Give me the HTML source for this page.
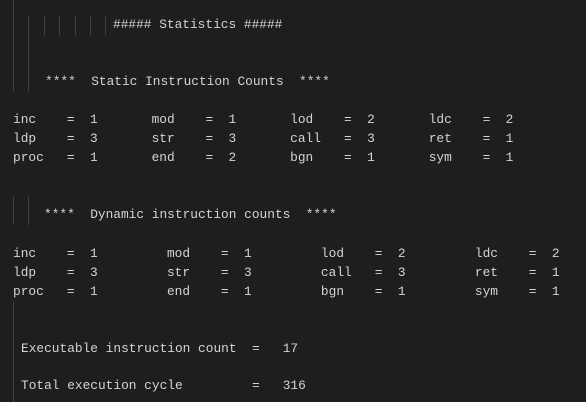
<!DOCTYPE html>
<html><head><meta charset="utf-8"><style>
html,body{margin:0;padding:0;}
body{width:586px;height:402px;background:#1e1e1e;position:relative;overflow:hidden;font-family:"Liberation Mono",monospace;font-size:12.83px;color:#d4d4d4;}
.t{position:absolute;white-space:pre;line-height:19px;}
.g{position:absolute;width:1px;background:#404040;}
</style></head><body>
<div class="g" style="left:13px;top:0;height:91px"></div>
<div class="g" style="left:28px;top:16px;height:75px"></div>
<div class="g" style="left:44px;top:16px;height:19px"></div>
<div class="g" style="left:59px;top:16px;height:19px"></div>
<div class="g" style="left:75px;top:16px;height:19px"></div>
<div class="g" style="left:90px;top:16px;height:19px"></div>
<div class="g" style="left:105px;top:16px;height:19px"></div>
<div class="t" style="left:113px;top:15px">##### Statistics #####</div>
<div class="t" style="left:45px;top:72px">****  Static Instruction Counts  ****</div>
<div class="t" style="left:13px;top:110px">inc    =  1       mod    =  1       lod    =  2       ldc    =  2
ldp    =  3       str    =  3       call   =  3       ret    =  1
proc   =  1       end    =  2       bgn    =  1       sym    =  1</div>
<div class="g" style="left:13px;top:196px;height:29px"></div>
<div class="g" style="left:28px;top:196px;height:29px"></div>
<div class="t" style="left:44px;top:205px">****  Dynamic instruction counts  ****</div>
<div class="t" style="left:13px;top:244px">inc    =  1         mod    =  1         lod    =  2         ldc    =  2
ldp    =  3         str    =  3         call   =  3         ret    =  1
proc   =  1         end    =  1         bgn    =  1         sym    =  1</div>
<div class="g" style="left:13px;top:302px;height:100px"></div>
<div class="t" style="left:21px;top:339px">Executable instruction count  =   17</div>
<div class="t" style="left:21px;top:376px">Total execution cycle         =   316</div>
</body></html>
